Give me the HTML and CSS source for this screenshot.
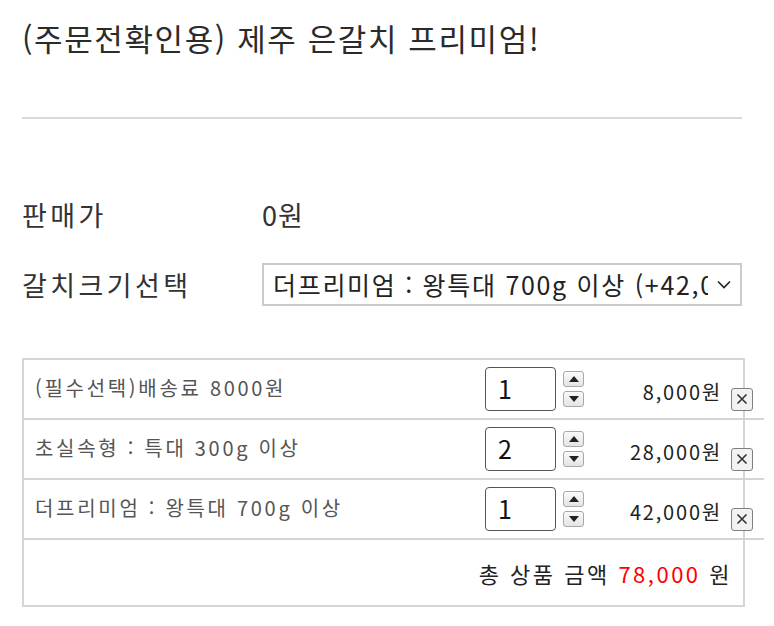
FILE: index.html
```html
<!DOCTYPE html>
<html lang="ko">
<head>
    <meta charset="UTF-8">
    <title>제주 은갈치 프리미엄</title>
    <link rel="stylesheet" href="styles.css">
</head>
<body>
    <div class="product">
        <h1 class="title">(주문전확인용) 제주 은갈치 프리미엄!</h1>
        <hr class="divider">

        <div class="field">
            <span class="field-label">판매가</span>
            <span class="field-value">0원</span>
        </div>
        <div class="field">
            <span class="field-label">갈치크기선택</span>
            <div class="select-wrap">
                <select class="size-select">
                    <option>더프리미엄 : 왕특대 700g 이상 (+42,000원)</option>
                </select>
                <svg class="chevron" width="14" height="9" viewBox="0 0 14 9">
                    <polyline points="1,1.5 7,7.5 13,1.5" fill="none" stroke="#222" stroke-width="1.6"/>
                </svg>
            </div>
        </div>

        <div class="cart">
            <div class="cart-row">
                <div class="item-name">(필수선택)배송료 8000원</div>
                <div class="qty">1</div>
                <div class="spin">
                    <span class="spin-btn"><i class="tri-up"></i></span>
                    <span class="spin-btn"><i class="tri-down"></i></span>
                </div>
                <div class="price">8,000원</div>
                <span class="remove">
                    <svg width="12" height="12" viewBox="0 0 12 12"><path d="M1.5 1.5L10.5 10.5M10.5 1.5L1.5 10.5" stroke="#333" stroke-width="1.6"/></svg>
                </span>
            </div>
            <div class="cart-row">
                <div class="item-name">초실속형 : 특대 300g 이상</div>
                <div class="qty">2</div>
                <div class="spin">
                    <span class="spin-btn"><i class="tri-up"></i></span>
                    <span class="spin-btn"><i class="tri-down"></i></span>
                </div>
                <div class="price">28,000원</div>
                <span class="remove">
                    <svg width="12" height="12" viewBox="0 0 12 12"><path d="M1.5 1.5L10.5 10.5M10.5 1.5L1.5 10.5" stroke="#333" stroke-width="1.6"/></svg>
                </span>
            </div>
            <div class="cart-row">
                <div class="item-name">더프리미엄 : 왕특대 700g 이상</div>
                <div class="qty">1</div>
                <div class="spin">
                    <span class="spin-btn"><i class="tri-up"></i></span>
                    <span class="spin-btn"><i class="tri-down"></i></span>
                </div>
                <div class="price">42,000원</div>
                <span class="remove">
                    <svg width="12" height="12" viewBox="0 0 12 12"><path d="M1.5 1.5L10.5 10.5M10.5 1.5L1.5 10.5" stroke="#333" stroke-width="1.6"/></svg>
                </span>
            </div>
            <div class="total">
                총 상품 금액 <span class="total-num">78,000</span> 원
            </div>
        </div>
    </div>
</body>
</html>
```

FILE: styles.css
```css
body {
    margin: 0;
    padding: 0 22px;
    font-family: "Noto Sans CJK KR", "Noto Sans", sans-serif;
    color: #333;
    background: #fff;
}
.product {
    width: 720px;
}
.title {
    margin: 0;
    padding-top: 16px;
    height: 50px;
    font-size: 31px;
    font-weight: normal;
    letter-spacing: 1.6px;
    line-height: 44px;
    color: #2b2b2b;
}
.divider {
    margin: 51px 0 0;
    border: none;
    border-top: 2px solid #dadada;
}
.field {
    display: flex;
    align-items: center;
    height: 70px;
}
.field:first-of-type {
    margin-top: 60px;
}
.field-label {
    width: 240px;
    font-size: 27px;
    letter-spacing: 3.4px;
    color: #333;
}
.field-value {
    font-size: 27px;
    letter-spacing: 1px;
}
.select-wrap {
    position: relative;
    width: 480px;
}
.size-select {
    appearance: none;
    -webkit-appearance: none;
    width: 100%;
    height: 43px;
    padding: 0 32px 0 9px;
    border: 2px solid #cbcbcb;
    border-radius: 0;
    background: #fff;
    font-family: inherit;
    font-size: 25px;
    letter-spacing: 1.7px;
    color: #222;
}
.chevron {
    position: absolute;
    right: 11px;
    top: 17px;
}
.cart {
    margin-top: 39px;
    width: 719px;
    border: 2px solid #d5d5d5;
}
.cart-row {
    display: flex;
    align-items: center;
    width: 740px;
    height: 58px;
    border-bottom: 2px solid #d5d5d5;
}
.item-name {
    width: 450px;
    padding-left: 11px;
    margin-top: -3px;
    font-size: 20px;
    letter-spacing: 2.7px;
    color: #555;
}
.qty {
    box-sizing: border-box;
    width: 71px;
    height: 44px;
    border: 1.5px solid #555;
    border-radius: 4px;
    padding-left: 12px;
    font-size: 25px;
    line-height: 40px;
    color: #111;
}
.spin {
    display: flex;
    flex-direction: column;
    gap: 4px;
    margin-left: 7px;
}
.spin-btn {
    display: flex;
    align-items: center;
    justify-content: center;
    box-sizing: border-box;
    width: 21px;
    height: 16px;
    border: 1px solid #a8a8a8;
    border-radius: 3px;
    background: linear-gradient(#fafafa, #e4e4e4);
}
.tri-up, .tri-down {
    width: 0;
    height: 0;
    border-left: 5px solid transparent;
    border-right: 5px solid transparent;
}
.tri-up {
    border-bottom: 6px solid #222;
}
.tri-down {
    border-top: 6px solid #222;
}
.price {
    width: 138px;
    text-align: right;
    font-size: 20px;
    letter-spacing: 1.8px;
    color: #222;
    margin-top: 4px;
}
.remove {
    display: flex;
    align-items: center;
    justify-content: center;
    box-sizing: border-box;
    width: 22px;
    height: 23px;
    margin: 20px 0 0 9px;
    border: 1.5px solid #808080;
    border-radius: 3px;
    background: #f2f2f2;
}
.total {
    height: 65px;
    line-height: 66px;
    text-align: right;
    padding-right: 11px;
    font-size: 22px;
    letter-spacing: 2.5px;
    color: #222;
}
.total-num {
    color: #ff0000;
}
```
